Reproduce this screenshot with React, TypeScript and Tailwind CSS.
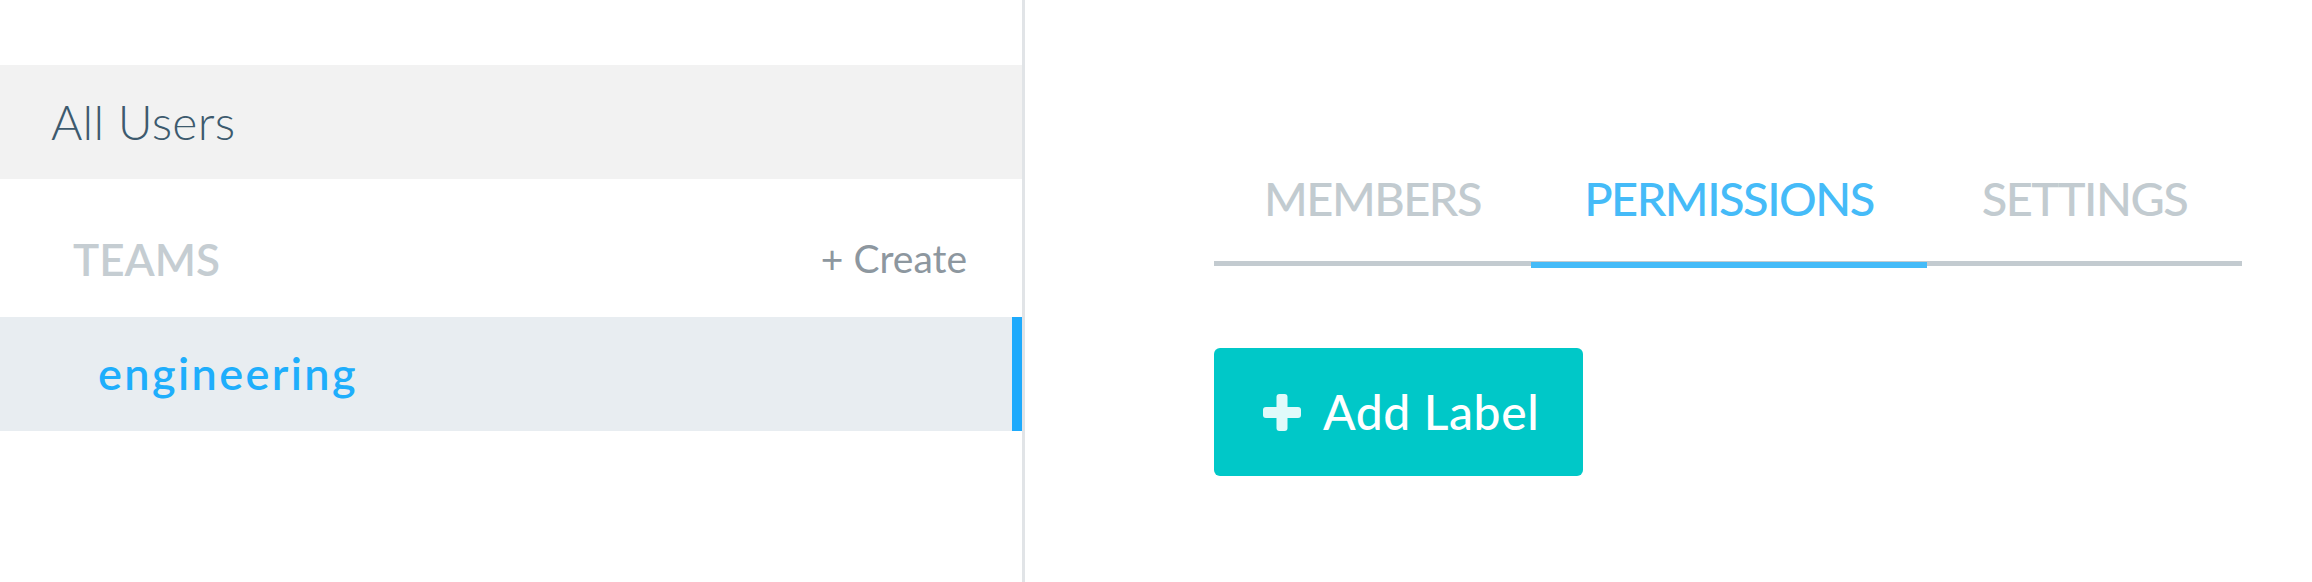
const font = { fontFamily: "Lato, 'Liberation Sans', sans-serif" }

function PlusIcon() {
  return (
    <svg width="38" height="37" viewBox="0 0 38 37" className="shrink-0">
      <rect x="13.5" y="0" width="11" height="37" rx="3" fill="#e0fafa" />
      <rect x="0" y="13" width="38" height="11" rx="3" fill="#e0fafa" />
    </svg>
  )
}

const tabs = [
  { name: 'MEMBERS', w: 'w-[317px]', active: false },
  { name: 'PERMISSIONS', w: 'w-[396px]', active: true },
  { name: 'SETTINGS', w: 'w-[315px]', active: false },
]

export default function App() {
  return (
    <div className="flex h-[582px] w-[2312px] bg-white" style={font}>
      {/* sidebar */}
      <div className="w-[1025px] shrink-0 border-r-[3px] border-[#e1e4e7] pt-[65px]">
        <div className="flex h-[114px] items-center bg-[#f2f2f2] pl-[51px]">
          <span className="text-[48px] font-light tracking-[0.3px] text-[#3d5a6e]">All Users</span>
        </div>

        <div className="flex h-[138px] items-baseline justify-between pl-[73px] pr-[55px] pt-[47px]">
          <span className="text-[44px] font-semibold text-[#c5cdd2]">TEAMS</span>
          <span className="relative -top-[3px] text-[39px] text-[#8d979f]">+ Create</span>
        </div>

        <div className="flex h-[114px] items-center border-r-[10px] border-[#1eaafc] bg-[#e8edf1] pl-[98px]">
          <span className="text-[45px] font-semibold tracking-[2.4px] text-[#1eaefc]">engineering</span>
        </div>
      </div>

      {/* main */}
      <div className="flex-1 pl-[189px] pr-[70px] pt-[170px]">
        <div className="flex border-b-[5px] border-[#c3cbd0]">
          {tabs.map((t) => (
            <div
              key={t.name}
              className={
                t.active
                  ? `${t.w} mb-[-7px] border-b-[6px] border-[#45bbf8] pb-[35px] text-center text-[47px] leading-[56px] font-medium tracking-[-1.5px] text-[#45bbf8]`
                  : `${t.w} pb-[35px] text-center text-[47px] leading-[56px] font-medium tracking-[-1.5px] text-[#c2cbd0]`
              }
            >
              {t.name}
            </div>
          ))}
        </div>

        <button className="mt-[82px] flex h-[128px] w-[369px] items-center gap-[22px] rounded-[6px] bg-[#00c8c8] pl-[49px] text-[48px] font-medium tracking-[0.6px] text-white">
          <PlusIcon />
          <span>Add Label</span>
        </button>
      </div>
    </div>
  )
}
